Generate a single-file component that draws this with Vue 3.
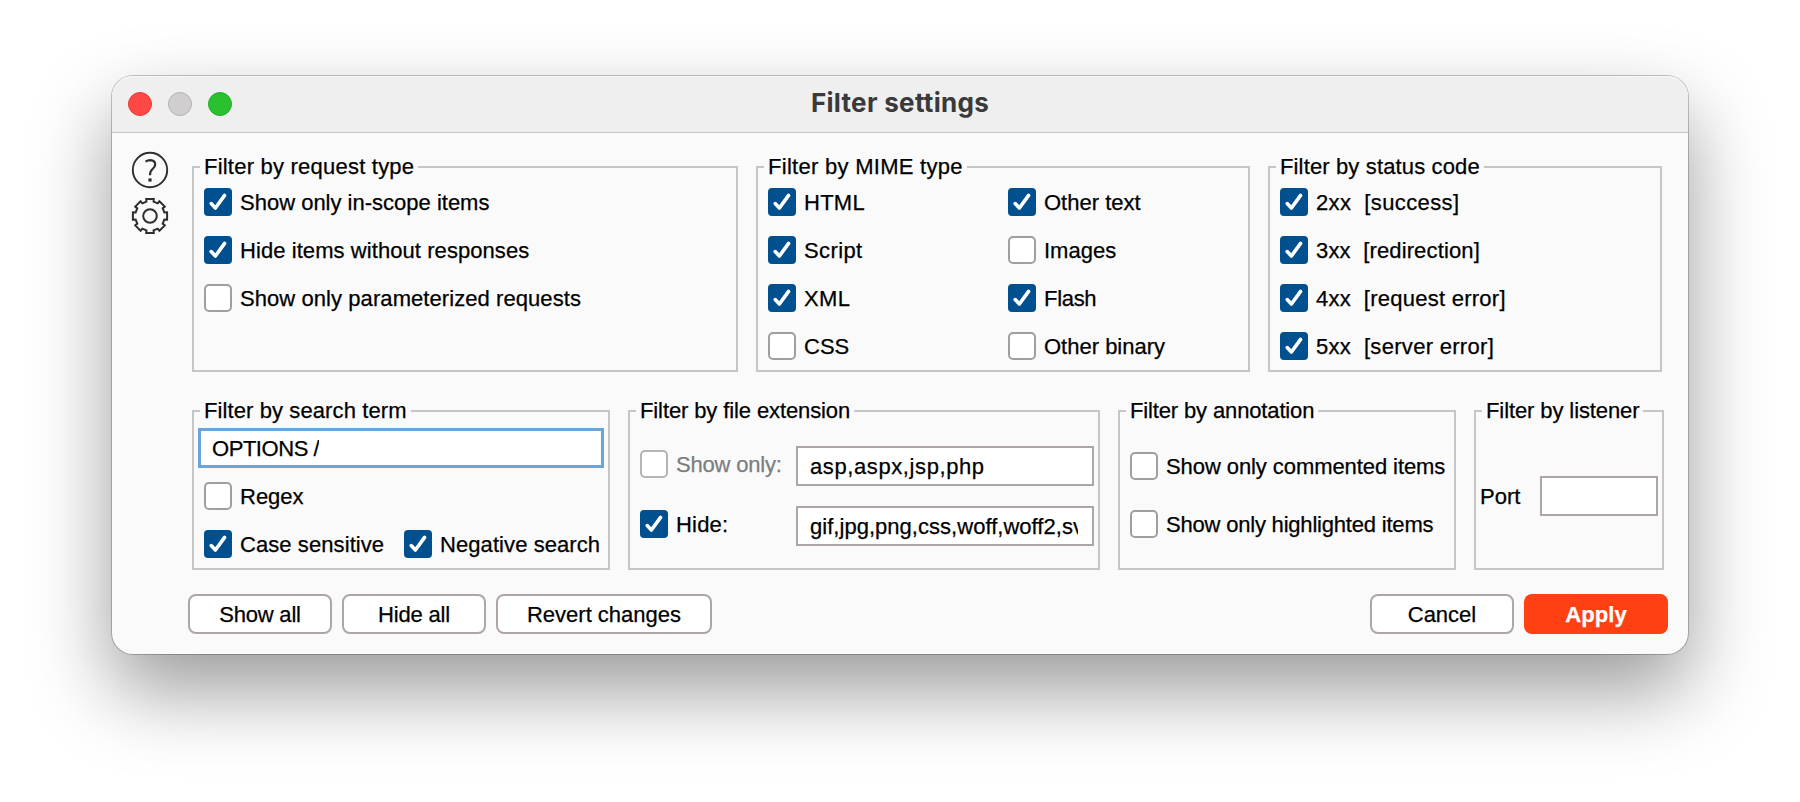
<script setup>
import { h } from 'vue'

// Checkbox with its caption; ls is the tracking of the caption in px
const Check = (props) =>
  h('label', { class: ['check', { on: props.on, disabled: props.disabled }] }, [
    h('span', { class: 'box' }, props.on
      ? [h('svg', { viewBox: '0 0 28 28', width: 28, height: 28 }, [
          h('path', { d: 'M7.2 15.6 L11.4 20 L20.6 7.4', fill: 'none', stroke: '#fff', 'stroke-width': 3.6, 'stroke-linecap': 'round', 'stroke-linejoin': 'round' })
        ])]
      : []),
    h('span', { class: 'caption', style: { letterSpacing: (props.ls || 0) + 'px' } }, props.text)
  ])
Check.props = ['on', 'disabled', 'text', 'ls']

const requestTypes = [
  { text: 'Show only in-scope items', on: true },
  { text: 'Hide items without responses', on: true, ls: 0.07 },
  { text: 'Show only parameterized requests', on: false, ls: 0.07 }
]
const mimeTypes = [
  { text: 'HTML', on: true, ls: 0.25 }, { text: 'Other text', on: true },
  { text: 'Script', on: true, ls: 0.4 }, { text: 'Images', on: false },
  { text: 'XML', on: true, ls: 0.4 }, { text: 'Flash', on: true, ls: -0.3 },
  { text: 'CSS', on: false }, { text: 'Other binary', on: false }
]
const statusCodes = [
  { text: '2xx  [success]', on: true, ls: 0.38 },
  { text: '3xx  [redirection]', on: true, ls: 0.14 },
  { text: '4xx  [request error]', on: true, ls: 0.26 },
  { text: '5xx  [server error]', on: true, ls: 0.3 }
]

// Gear outline with eight shallow teeth
const points = []
for (let i = 0; i < 8; i++) {
  for (const [r, a] of [[14.8, -14], [17.5, -12.5], [17.5, 12.5], [14.8, 14]]) {
    const t = ((i * 45 + a) * Math.PI) / 180
    points.push((r * Math.cos(t)).toFixed(2) + ',' + (r * Math.sin(t)).toFixed(2))
  }
}
const gear = points.join(' ')
</script>

<template>
  <main class="stage">
    <div class="window">
      <header class="titlebar">
        <div class="lights"><i class="red"></i><i class="gray"></i><i class="green"></i></div>
        <h1>Filter settings</h1>
      </header>
      <div class="body">
        <aside>
          <svg width="38" height="38" viewBox="-19 -19 38 38" fill="none" stroke="#2e2e2e">
            <circle r="17.2" stroke-width="1.9" />
            <path d="M-4.4 -8.4 Q-2.6 -9.8 0.4 -9.8 Q5.2 -9.6 5.2 -5.4 Q5.2 -3 2.6 -1 Q0 1 0 5.2" stroke-width="2.2" />
            <path d="M0 8.4 V11.6" stroke-width="3.2" />
          </svg>
          <svg width="38" height="38" viewBox="-19 -19 38 38" fill="none" stroke="#2e2e2e" stroke-width="2">
            <circle r="6.8" />
            <polygon :points="gear" />
          </svg>
        </aside>
        <div class="content">
          <div class="row top">
            <section class="panel request">
              <h2>Filter by request type</h2>
              <div class="list"><Check v-for="c in requestTypes" :key="c.text" v-bind="c" /></div>
            </section>
            <section class="panel mime">
              <h2>Filter by MIME type</h2>
              <div class="list two"><Check v-for="c in mimeTypes" :key="c.text" v-bind="c" /></div>
            </section>
            <section class="panel status">
              <h2>Filter by status code</h2>
              <div class="list"><Check v-for="c in statusCodes" :key="c.text" v-bind="c" /></div>
            </section>
          </div>
          <div class="row bottom">
            <section class="panel search">
              <h2>Filter by search term</h2>
              <div class="field focus"><span>OPTIONS /</span></div>
              <div class="list">
                <Check text="Regex" />
                <div class="pair">
                  <Check text="Case sensitive" :on="true" :ls="0.08" />
                  <Check text="Negative search" :on="true" :ls="0.08" />
                </div>
              </div>
            </section>
            <section class="panel ext">
              <h2>Filter by file extension</h2>
              <div class="line"><Check text="Show only:" :disabled="true" :ls="-0.2" /><div class="field only"><span>asp,aspx,jsp,php</span></div></div>
              <div class="line"><Check text="Hide:" :on="true" :ls="0.2" /><div class="field hide"><span>gif,jpg,png,css,woff,woff2,svg</span></div></div>
            </section>
            <section class="panel note">
              <h2>Filter by annotation</h2>
              <div class="list"><Check text="Show only commented items" :ls="-0.08" /><Check text="Show only highlighted items" :ls="-0.2" /></div>
            </section>
            <section class="panel listener">
              <h2>Filter by listener</h2>
              <div class="port"><span>Port</span><div class="field"></div></div>
            </section>
          </div>
          <footer>
            <button>Show all</button>
            <button>Hide all</button>
            <button class="wide">Revert changes</button>
            <button class="cancel">Cancel</button>
            <button class="apply">Apply</button>
          </footer>
        </div>
      </div>
    </div>
  </main>
</template>

<style>
html, body { margin: 0; background: #fff; }
</style>

<style scoped>
* { box-sizing: border-box; }
.stage { width: 1800px; height: 802px; padding: 76px 112px 0; overflow: hidden; font: 22px/26px "Liberation Sans", Arial, sans-serif; color: #000; -webkit-text-stroke: .25px currentColor; }
.window { width: 1576px; height: 578px; border-radius: 21px; background: #fafafa; box-shadow: 0 0 0 1px rgba(0,0,0,.22), 0 36px 80px rgba(0,0,0,.4); }
.titlebar { height: 57px; border-bottom: 1px solid #c6c6c6; border-radius: 21px 21px 0 0; background: #efefef; box-shadow: inset 0 1px 0 #f8f8f8; display: grid; grid-template-columns: 200px 1fr 200px; align-items: center; }
.lights { display: flex; gap: 16px; padding-left: 16px; }
.lights i { width: 24px; height: 24px; border-radius: 50%; }
.red { background: #ff4845; border: 1px solid #e63c3a; }
.gray { background: #d1ced0; border: 1px solid #b3b0b2; }
.green { background: #2ac131; border: 1px solid #20ad27; }
h1 { margin: 0 0 2px; text-align: center; font: 700 26px/30px Inter, sans-serif; letter-spacing: .3px; color: #3a3a3a; -webkit-text-stroke: 0; }
.body { display: flex; padding-top: 18px; }
aside { width: 76px; display: flex; flex-direction: column; align-items: flex-start; gap: 8px; padding-left: 19px; }
.content { flex: 1; }
.row { display: flex; padding-left: 4px; gap: 18px; }
.row.top { padding-top: 15px; }
.row.bottom { padding-top: 38px; }
.panel { border: 2px solid #c6c6c6; flex: none; }
.top .panel { height: 206px; }
.bottom .panel { height: 160px; }
.panel h2 { width: max-content; margin: -14px 0 0 6px; padding: 0 4px; background: #fafafa; font: inherit; white-space: pre; }
.request { width: 546px; }
.request h2 { letter-spacing: .22px; }
.mime { width: 494px; }
.mime h2 { letter-spacing: .28px; }
.status { width: 394px; }
.status h2 { letter-spacing: .14px; }
.search { width: 418px; }
.search h2 { letter-spacing: .1px; }
.ext { width: 472px; }
.note { width: 338px; }
.note h2 { letter-spacing: -.14px; }
.listener { width: 190px; }
.listener h2 { letter-spacing: -.1px; }
.list { display: grid; gap: 20px; padding: 8px 0 0 10px; justify-items: start; }
.list.two { grid-template-columns: 240px 1fr; column-gap: 0; }
.pair { display: flex; }
.pair > :first-child { width: 200px; }
:deep(.check) { display: flex; align-items: center; gap: 8px; height: 28px; white-space: pre; }
:deep(.caption) { padding-top: 2px; }
:deep(.box) { width: 28px; height: 28px; flex: none; border: 2px solid #9f9f9f; border-radius: 5px; background: #fff; box-sizing: border-box; }
:deep(.on .box) { border: 0; border-radius: 4px; background: #00508f; }
:deep(.box svg) { display: block; }
:deep(.disabled .box) { border-color: #b4b4b4; }
:deep(.disabled) { color: #7d7d7d; }
.field { height: 40px; border: 2px solid #aea5a7; background: #fff; padding: 2px 14px 0 12px; display: flex; align-items: center; }
.field span { overflow: hidden; white-space: nowrap; }
.field.focus { width: 406px; margin: 4px 0 0 4px; border: 3px solid #6ba3dc; padding-left: 11px; letter-spacing: -.45px; }
.only { letter-spacing: .6px; }
.hide { letter-spacing: .03px; }
.search .list { padding-top: 14px; }
.line { display: flex; padding-left: 10px; height: 60px; }
.ext h2 { margin-bottom: 22px; letter-spacing: -.11px; }
.line > :first-child { width: 156px; margin-top: 4px; }
.line .field { width: 298px; }
.note .list { padding-top: 28px; gap: 30px; }
.port { display: flex; align-items: center; padding: 52px 4px 0; }
.port span { width: 60px; padding-top: 2px; }
.port .field { width: 118px; }
footer { display: flex; gap: 10px; margin-top: 24px; padding-right: 20px; }
button { width: 144px; height: 40px; padding: 2px 0 0; border: 2px solid #aea5a7; border-radius: 8px; background: #fff; font: 22px/26px "Liberation Sans", Arial, sans-serif; letter-spacing: -.2px; color: #000; -webkit-text-stroke: inherit; }
.wide { width: 216px; letter-spacing: 0; }
.cancel { margin-left: auto; letter-spacing: 0; }
.apply { border: 0; background: #ff4013; color: #fff; font-weight: 700; letter-spacing: .1px; }
</style>
